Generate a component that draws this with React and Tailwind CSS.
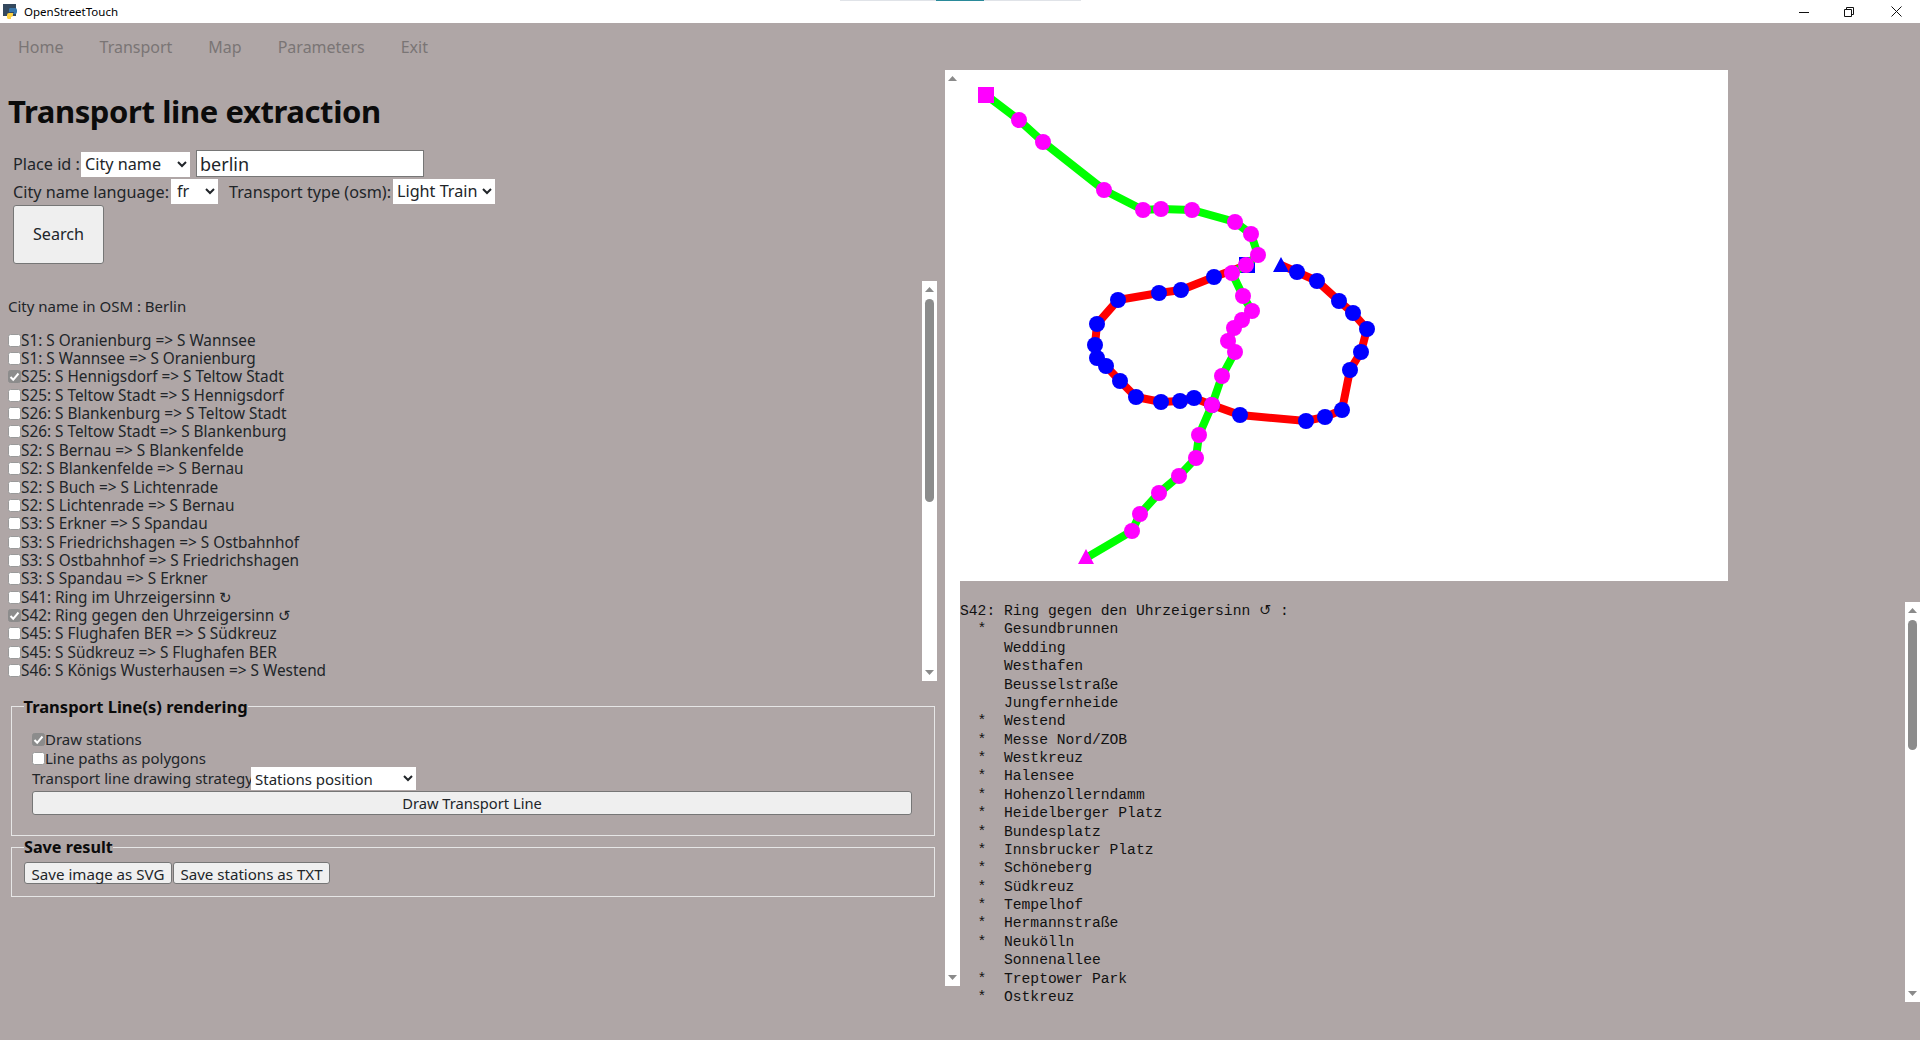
import React from "react";

const lines = [
  ["S1: S Oranienburg => S Wannsee", false],
  ["S1: S Wannsee => S Oranienburg", false],
  ["S25: S Hennigsdorf => S Teltow Stadt", true],
  ["S25: S Teltow Stadt => S Hennigsdorf", false],
  ["S26: S Blankenburg => S Teltow Stadt", false],
  ["S26: S Teltow Stadt => S Blankenburg", false],
  ["S2: S Bernau => S Blankenfelde", false],
  ["S2: S Blankenfelde => S Bernau", false],
  ["S2: S Buch => S Lichtenrade", false],
  ["S2: S Lichtenrade => S Bernau", false],
  ["S3: S Erkner => S Spandau", false],
  ["S3: S Friedrichshagen => S Ostbahnhof", false],
  ["S3: S Ostbahnhof => S Friedrichshagen", false],
  ["S3: S Spandau => S Erkner", false],
  ["S41: Ring im Uhrzeigersinn ↻", false],
  ["S42: Ring gegen den Uhrzeigersinn ↺", true],
  ["S45: S Flughafen BER => S Südkreuz", false],
  ["S45: S Südkreuz => S Flughafen BER", false],
  ["S46: S Königs Wusterhausen => S Westend", false],
];

const stations = [
  "  *  Gesundbrunnen",
  "     Wedding",
  "     Westhafen",
  "     Beusselstraße",
  "     Jungfernheide",
  "  *  Westend",
  "  *  Messe Nord/ZOB",
  "  *  Westkreuz",
  "  *  Halensee",
  "  *  Hohenzollerndamm",
  "  *  Heidelberger Platz",
  "  *  Bundesplatz",
  "  *  Innsbrucker Platz",
  "  *  Schöneberg",
  "  *  Südkreuz",
  "  *  Tempelhof",
  "  *  Hermannstraße",
  "  *  Neukölln",
  "     Sonnenallee",
  "  *  Treptower Park",
  "  *  Ostkreuz",
];

// station positions, in page pixels (the svg viewBox starts at the canvas corner)
const greenPts = [
  [986, 95], [1019, 120], [1043, 142], [1104, 190], [1143, 210], [1161, 209], [1192, 210],
  [1235, 222], [1251, 234], [1258, 255], [1246, 265], [1232, 273], [1243, 296], [1252, 311],
  [1242, 320], [1234, 328], [1228, 341], [1235, 352], [1222, 376], [1212, 405], [1199, 435],
  [1196, 458], [1179, 476], [1159, 493], [1140, 514], [1132, 531], [1086, 558],
];
const redPts = [
  [1281, 265], [1297, 272], [1317, 281], [1339, 301], [1353, 313], [1367, 329], [1361, 352],
  [1350, 370], [1342, 410], [1325, 417], [1306, 421], [1240, 415], [1212, 405], [1194, 398],
  [1180, 401], [1161, 402], [1136, 397], [1120, 381], [1106, 366], [1097, 358], [1095, 345],
  [1097, 324], [1118, 300], [1159, 293], [1181, 290], [1214, 277], [1247, 265],
];

const toPoints = (pts) => pts.map((p) => p.join(",")).join(" ");

function TransportMap() {
  return (
    <svg viewBox="960 70 768 511" className="block w-full h-full">
      <polyline points={toPoints(redPts)} fill="none" stroke="#ff0000" strokeWidth="8" />
      <polygon points="1281,257 1273,272 1289,272" fill="#0000ff" />
      {redPts.slice(1, -1).map((p, i) => (
        <circle key={i} cx={p[0]} cy={p[1]} r="8" fill="#0000ff" />
      ))}
      <rect x="1239" y="257" width="16" height="16" fill="#0000ff" />
      <polyline points={toPoints(greenPts)} fill="none" stroke="#00ff00" strokeWidth="8" />
      <rect x="978" y="87" width="16" height="16" fill="#ff00ff" />
      {greenPts.slice(1, -1).map((p, i) => (
        <circle key={i} cx={p[0]} cy={p[1]} r="8" fill="#ff00ff" />
      ))}
      <polygon points="1086,549 1078,564 1094,564" fill="#ff00ff" />
    </svg>
  );
}

function Arrow({ down }) {
  return (
    <svg width="9" height="5" viewBox="0 0 9 5" className="block shrink-0">
      <polygon points={down ? "0,0 9,0 4.5,5" : "4.5,0 9,5 0,5"} fill="#8a8a8a" />
    </svg>
  );
}

function Scrollbar({ thumbTop, thumbHeight, className }) {
  return (
    <div className={"flex flex-col items-center w-[15px] shrink-0 bg-white pt-[6px] pb-[6px] " + className}>
      <Arrow />
      {thumbHeight > 0 && (
        <div
          className="w-[9px] rounded-full bg-[#8c8c8c]"
          style={{ marginTop: thumbTop, height: thumbHeight }}
        />
      )}
      <div className="mt-auto">
        <Arrow down />
      </div>
    </div>
  );
}

function Check({ checked }) {
  return (
    <span
      className={
        "relative inline-block w-[13px] h-[13px] shrink-0 rounded-[2.5px] border " +
        (checked ? "bg-[#8c8c8c] border-[#8c8c8c]" : "bg-white border-[#9a9a9a]")
      }
    >
      {checked && (
        <svg viewBox="0 0 13 13" className="absolute -left-px -top-px w-[13px] h-[13px]">
          <path d="M2.5 7 L5.2 9.8 L10.5 3.5" fill="none" stroke="#fff" strokeWidth="2" />
        </svg>
      )}
    </span>
  );
}

function CheckRow({ label, checked }) {
  return (
    <label className="flex items-center h-[18.37px] whitespace-nowrap">
      <Check checked={checked} />
      <span>{label}</span>
    </label>
  );
}

function NativeButton({ children, className }) {
  return (
    <button className={"bg-[#efefef] border border-[#767676] rounded-[3px] text-[#212529] " + className}>
      {children}
    </button>
  );
}

export default function App() {
  return (
    <div className="h-screen w-full overflow-hidden bg-[#afa6a6] text-[#212529] font-['Noto_Sans',sans-serif]">
      {/* Window title bar */}
      <div className="relative flex items-center h-[23px] bg-white text-black">
        <svg width="15" height="15" viewBox="0 0 15 15" className="ml-[3px]">
          <rect x="0" y="0" width="13" height="12" fill="#34495e" />
          <path d="M7 4h5a2 2 0 0 1 2 2v2a2 2 0 0 1-2 2H8v-1h3V8H6V6a2 2 0 0 1 1-2z" fill="#3776ab" />
          <path d="M8 15H5a2 2 0 0 1-1-2v-2a2 2 0 0 1 2-2h4v2a2 2 0 0 1-2 2z" fill="#ffd343" />
        </svg>
        <span className="ml-[6px] text-[11.5px]">OpenStreetTouch</span>
        <div className="absolute top-0 left-[840px] flex w-[241px] h-px bg-[#e0e3e8]">
          <div className="ml-[96px] w-[48px] h-px bg-[#2a8a9a]" />
        </div>
        <div className="ml-auto flex items-center">
          <svg width="10" height="10" viewBox="0 0 10 10" className="mr-[35px]">
            <path d="M0 5.5H10" stroke="#111" fill="none" />
          </svg>
          <svg width="10" height="10" viewBox="0 0 10 10" className="mr-[37px]">
            <path d="M0.5 2.5H7.5V9.5H0.5Z M2.5 2.5V0.5H9.5V7.5H7.5" stroke="#111" fill="none" />
          </svg>
          <svg width="11" height="11" viewBox="0 0 11 11" className="mr-[18px]">
            <path d="M0.5 0.5L10.5 10.5M10.5 0.5L0.5 10.5" stroke="#111" fill="none" />
          </svg>
        </div>
      </div>

      <div className="flex">
        {/* Left column */}
        <div className="w-[945px] shrink-0">
          <nav className="flex items-center h-[48px] pl-[18px] gap-[36px] text-[16px] text-[#7a7575]">
            <span>Home</span>
            <span>Transport</span>
            <span>Map</span>
            <span>Parameters</span>
            <span>Exit</span>
          </nav>

          <h1 className="mt-[20px] ml-[8px] h-[40px] leading-[40px] text-[31px] font-bold text-[#0b0b0b] tracking-[-0.4px]">
            Transport line extraction
          </h1>

          <div className="mt-[19px] ml-[13px] text-[16.2px] whitespace-nowrap">
            <div className="flex items-center h-[27px]">
              <span className="w-[68px] pt-[2px]">Place id :</span>
              <select defaultValue="city" className="w-[109px] h-[25px] bg-white mt-[1px]">
                <option value="city">City name</option>
              </select>
              <input
                type="text"
                defaultValue="berlin"
                className="ml-[6px] w-[228px] h-[27px] bg-white border border-[#767676] px-[3px] pt-[1px] text-[18px] outline-none"
              />
            </div>
            <div className="flex items-center h-[26px] mt-[1px]">
              <span className="w-[158px] pt-[2px]">City name language:</span>
              <select defaultValue="fr" className="w-[47px] h-[25px] bg-white pl-[2px]">
                <option value="fr">fr</option>
              </select>
              <span className="ml-[11px] w-[164px] pt-[2px]">Transport type (osm):</span>
              <select defaultValue="light" className="w-[102px] h-[25px] bg-white">
                <option value="light">Light Train</option>
              </select>
            </div>
            <NativeButton className="block w-[91px] h-[59px] mt-[1px]">Search</NativeButton>
          </div>

          {/* Line list */}
          <div className="flex justify-between mt-[17px] ml-[8px] w-[929px] h-[400px] text-[15px]">
            <div className="pt-[15.5px]">
              <div className="h-[18px] leading-[18px]">City name in OSM : Berlin</div>
              <div className="mt-[16.5px] text-[15.35px]">
                {lines.map(([label, checked]) => (
                  <CheckRow key={label} label={label} checked={checked} />
                ))}
              </div>
            </div>
            <Scrollbar thumbTop={7} thumbHeight={203} />
          </div>

          {/* Rendering options */}
          <fieldset className="mt-[14px] ml-[11px] w-[924px] border border-[#e6e6e6] pl-[20px] pr-[22px] pt-[13.5px] pb-[20px] text-[15px]">
            <legend className="-ml-[8.5px] h-[22px] leading-[24px] text-[16.5px] font-bold text-[#0b0b0b]">
              Transport Line(s) rendering
            </legend>
            <CheckRow label="Draw stations" checked />
            <CheckRow label="Line paths as polygons" checked={false} />
            <div className="flex items-center h-[23px]">
              <span className="w-[219px] whitespace-nowrap">Transport line drawing strategy</span>
              <select defaultValue="pos" className="w-[165px] h-[23px] bg-white">
                <option value="pos">Stations position</option>
              </select>
            </div>
            <NativeButton className="block w-[880px] h-[24px] mt-[1px] text-[14.7px]">Draw Transport Line</NativeButton>
          </fieldset>

          <fieldset className="ml-[11px] w-[924px] border border-[#e6e6e6] pl-[12px] pt-[4px] pb-[12px] text-[15.1px]">
            <legend className="h-[22px] leading-[22px] text-[16.2px] font-bold text-[#0b0b0b]">
              Save result
            </legend>
            <div className="flex gap-[1px]">
              <NativeButton className="w-[148px] h-[22px]">Save image as SVG</NativeButton>
              <NativeButton className="w-[157px] h-[22px]">Save stations as TXT</NativeButton>
            </div>
          </fieldset>
        </div>

        {/* Right column */}
        <div className="flex flex-1 mt-[47px]">
          <Scrollbar thumbHeight={0} className="h-[916px]" />
          <div className="flex-1">
            <div className="w-[768px] h-[511px] bg-white">
              <TransportMap />
            </div>
            <div className="flex justify-between items-start mt-[21px] h-[400px]">
              <pre className="-mt-[1px] font-['Liberation_Mono','DejaVu_Sans_Mono',monospace] text-[14.67px] leading-[18.38px] text-[#111]">
                S42: Ring gegen den Uhrzeigersinn <span className="font-['DejaVu_Sans',sans-serif]">↺</span> :{"\n"}
                {stations.join("\n")}
              </pre>
              <Scrollbar thumbTop={7} thumbHeight={130} className="h-[400px]" />
            </div>
          </div>
        </div>
      </div>
    </div>
  );
}
